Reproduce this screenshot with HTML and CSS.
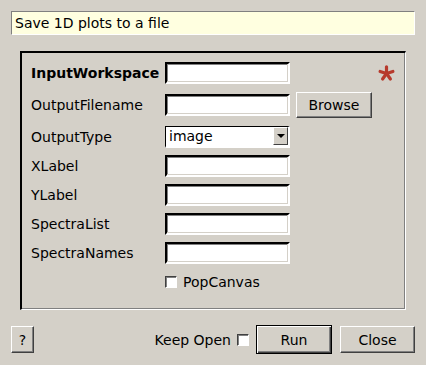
FILE: index.html
```html
<!DOCTYPE html>
<html lang="en">
<head>
<meta charset="UTF-8" />
<title>SavePlot1D</title>
<link rel="stylesheet" href="styles.css">
</head>
<body>

<!-- Описание алгоритма -->
<div class="summary">Save 1D plots to a file</div>

<!-- Свойства -->
<div class="frame">
  <div class="props">
    <label class="lbl bold">InputWorkspace</label>
    <span class="field"></span>
    <span></span>
    <span class="star">
      <svg width="17" height="17" viewBox="0 0 17 17">
        <g stroke="#b73a2c" stroke-width="3.2" stroke-linecap="round">
          <line x1="8.5" y1="8.5" x2="8.5" y2="1.8"/>
          <line x1="8.5" y1="8.5" x2="14.9" y2="6.4"/>
          <line x1="8.5" y1="8.5" x2="12.4" y2="14"/>
          <line x1="8.5" y1="8.5" x2="4.6" y2="14"/>
          <line x1="8.5" y1="8.5" x2="2.1" y2="6.4"/>
        </g>
      </svg>
    </span>

    <label class="lbl">OutputFilename</label>
    <span class="field"></span>
    <button class="btn browse">Browse</button>
    <span></span>

    <label class="lbl">OutputType</label>
    <span class="combo"><span class="combo-text">image</span><span class="combo-arrow"></span></span>
    <span></span><span></span>

    <label class="lbl">XLabel</label>
    <span class="field"></span>
    <span></span><span></span>

    <label class="lbl">YLabel</label>
    <span class="field"></span>
    <span></span><span></span>

    <label class="lbl">SpectraList</label>
    <span class="field"></span>
    <span></span><span></span>

    <label class="lbl">SpectraNames</label>
    <span class="field"></span>
    <span></span><span></span>

    <span></span>
    <span class="check-row"><span class="check"></span>PopCanvas</span>
    <span></span><span></span>
  </div>
</div>

<!-- Нижняя панель кнопок -->
<div class="bottom">
  <button class="btn help">?</button>
  <span class="keep">Keep Open <span class="check"></span></span>
  <button class="btn run">Run</button>
  <button class="btn close">Close</button>
</div>

</body>
</html>
```

FILE: styles.css
```css
/* Общие стили */
body {
  margin: 0;
  padding: 11px 11px 0 11px;
  background: #d4d0c8;
  font-family: 'DejaVu Sans', sans-serif;
  font-size: 14px;
  color: #000;
  width: 404px;
  height: 354px;
}

/* Поле описания */
.summary {
  height: 22px;
  line-height: 22px;
  padding-left: 3px;
  background: #ffffe0;
  border-top: 1px solid #808080;
  border-left: 1px solid #808080;
  border-right: 1px solid #fff;
  border-bottom: 1px solid #fff;
}

/* Рамка со свойствами */
.frame {
  margin: 16px 9px 0 9px;
  border-top: 2px solid #000;
  border-left: 2px solid #000;
  border-right: 1px solid #fff;
  border-bottom: 1px solid #fff;
  box-shadow: inset -1px -1px 0 #808080;
  padding: 8px 0 0 9px;
  box-sizing: border-box;
  height: 259px;
}
.props {
  display: grid;
  grid-template-columns: 128px 125px 76px 1fr;
  grid-template-rows: 24px 26px 23px repeat(5, 22px);
  column-gap: 6px;
  row-gap: 7px;
  align-items: center;
}
.lbl {
  white-space: nowrap;
}
.bold {
  font-weight: bold;
}

/* Поля ввода */
.field, .combo {
  display: block;
  height: 22px;
  box-sizing: border-box;
  background: #fff;
  border-top: 2px solid #000;
  border-left: 2px solid #000;
  border-right: 2px solid #fff;
  border-bottom: 2px solid #fff;
  box-shadow: inset -1px -1px 0 #d4d0c8, inset 1px 1px 0 #808080;
}
.combo {
  display: flex;
  align-items: center;
  justify-content: space-between;
  border-top: 1px solid #000;
  border-left: 1px solid #000;
  box-shadow: none;
}
.combo-text {
  padding-left: 3px;
}
.combo-arrow {
  width: 15px;
  height: 18px;
  background: #d4d0c8;
  border-top: 1px solid #fff;
  border-left: 1px solid #fff;
  border-right: 1px solid #404040;
  border-bottom: 1px solid #404040;
  box-sizing: border-box;
  display: flex;
  align-items: center;
  justify-content: center;
}
.combo-arrow::after {
  content: '';
  border-left: 4px solid transparent;
  border-right: 4px solid transparent;
  border-top: 4px solid #000;
}

/* Кнопки */
.btn {
  font-family: inherit;
  font-size: 14px;
  background: #d4d0c8;
  color: #000;
  border-top: 1px solid #fff;
  border-left: 1px solid #fff;
  border-right: 1px solid #404040;
  border-bottom: 1px solid #404040;
  box-shadow: inset -1px -1px 0 #808080;
  padding: 0;
  height: 27px;
}
.browse {
  height: 26px;
  width: 76px;
}

.star {
  justify-self: end;
  margin-right: 10px;
  height: 17px;
}

/* Флажки */
.check-row {
  display: flex;
  align-items: center;
  gap: 6px;
}
.check {
  display: inline-block;
  width: 12px;
  height: 12px;
  box-sizing: border-box;
  background: #fff;
  border-top: 1px solid #404040;
  border-left: 1px solid #404040;
  border-right: 1px solid #fff;
  border-bottom: 1px solid #fff;
  box-shadow: inset 1px 1px 0 #808080;
}

/* Нижняя панель */
.bottom {
  display: flex;
  align-items: center;
  margin-top: 15px;
}
.help {
  width: 23px;
}
.keep {
  margin-left: auto;
  display: flex;
  align-items: center;
  gap: 6px;
  margin-right: 7px;
}
.run {
  width: 76px;
  height: 29px;
  border: 1px solid #000;
  box-shadow: inset 1px 1px 0 #fff, inset -1px -1px 0 #404040, inset -2px -2px 0 #808080;
  margin-right: 8px;
}
.close {
  width: 75px;
}
```
